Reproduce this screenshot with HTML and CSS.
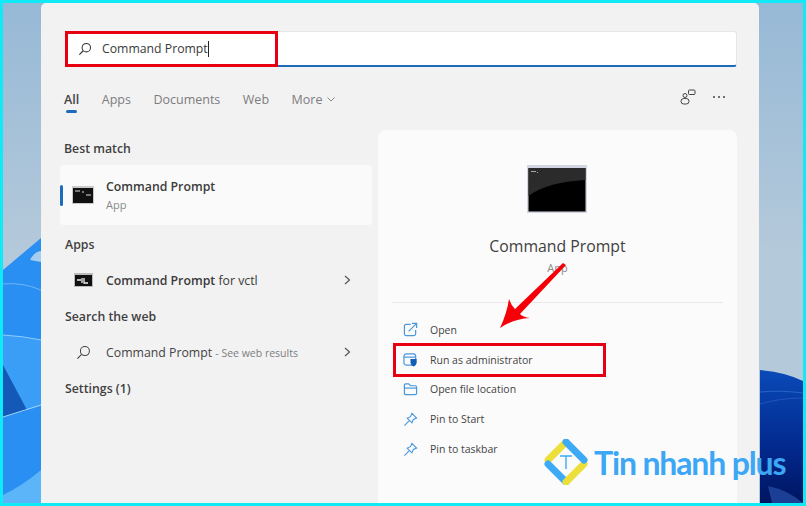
FILE: index.html
```html
<!DOCTYPE html>
<html lang="en">
  <head>
    <meta charset="UTF-8">
    <title>Command Prompt - Search</title>
    <link rel="stylesheet" href="styles.css">
  </head>
  <body>
    <div class="frame">
      <svg class="wallpaper" width="800" height="500" viewBox="3 3 800 500">
        <defs>
          <linearGradient id="sky" x1="0" y1="0" x2="0" y2="1">
            <stop offset="0" stop-color="#97b9d6"/>
            <stop offset="0.5" stop-color="#b4c9da"/>
            <stop offset="1" stop-color="#b4c9da"/>
          </linearGradient>
          <linearGradient id="navy" x1="0" y1="0" x2="0" y2="1">
            <stop offset="0" stop-color="#0a4ab8"/>
            <stop offset="0.6" stop-color="#02288c"/>
            <stop offset="1" stop-color="#001560"/>
          </linearGradient>
        </defs>
        <rect x="3" y="3" width="800" height="500" fill="url(#sky)"/>
        <path d="M3 270 L41 238 V503 H3 Z" fill="#2a8ff2"/>
        <path d="M30 260 Q34 252 41 251 V262 Z" fill="#a5cdf0"/>
        <path d="M3 284 Q22 282 41 290" fill="none" stroke="#6db6f7" stroke-width="1"/>
        <path d="M3 335 Q22 336 41 340 V405 L3 417 Z" fill="#3a9ef6"/>
        <path d="M3 335 Q22 336 41 340" fill="none" stroke="#8fcdfb" stroke-width="1"/>
        <path d="M3 365 L27 410 L3 417 Z" fill="#1559b8"/>
        <path d="M3 417 L41 405" fill="none" stroke="#a3d7fb" stroke-width="1"/>
        <path d="M3 495 Q22 486 41 470 V503 H3 Z" fill="#5bb5f8"/>
        <path d="M760 370 Q785 372 803 381 V503 H760 Z" fill="url(#navy)"/>
        <path d="M760 392 Q780 390 803 393" fill="none" stroke="#2a62c8" stroke-width="1"/>
        <path d="M760 404 Q780 398 803 398" fill="none" stroke="#1f55bb" stroke-width="1"/>
        <path d="M768 486 Q788 490 803 503 H772 Z" fill="#1a3f94"/>
      </svg>

      <div class="panel">
        <div class="search-box">
          <svg class="search-icon" width="14" height="14" viewBox="0 0 16 16">
            <circle cx="9.5" cy="6.5" r="4.8" fill="none" stroke="#333" stroke-width="1.2"/>
            <path d="M6 10 L1.5 14.5" stroke="#333" stroke-width="1.3"/>
          </svg>
          <span class="search-text">Command Prompt</span><span class="caret"></span>
        </div>

        <div class="tabs">
          <div class="tab active">All</div>
          <div class="tab">Apps</div>
          <div class="tab">Documents</div>
          <div class="tab">Web</div>
          <div class="tab">More
            <svg width="8" height="5" viewBox="0 0 8 5"><path d="M.5 .5 L4 4 L7.5 .5" fill="none" stroke="#888" stroke-width="1"/></svg>
          </div>
          <div class="tab-tools">
            <svg width="16" height="16" viewBox="0 0 16 16" fill="none" stroke="#444" stroke-width="1">
              <rect x="8.5" y="1" width="6.5" height="4.5" rx="1"/>
              <circle cx="5" cy="6.5" r="2"/>
              <rect x="1" y="9.5" width="8" height="5.5" rx="2.7"/>
            </svg>
            <div class="dots"><span></span><span></span><span></span></div>
          </div>
        </div>

        <div class="main">
          <div class="results">
            <div class="heading first">Best match</div>
            <div class="best-card">
              <span class="accent"></span>
              <svg class="cmd-small" width="22" height="18" viewBox="0 0 22 18">
                <rect width="22" height="18" fill="#c9c9c9"/>
                <rect x="1" y="2" width="20" height="15" fill="#111"/>
                <path d="M3 5 H8 M10 6 H12 M14 9 H19" stroke="#ddd" stroke-width="1.2"/>
              </svg>
              <div>
                <div class="item-title">Command Prompt</div>
                <div class="item-sub">App</div>
              </div>
            </div>
            <div class="heading">Apps</div>
            <div class="row">
              <svg class="cmd-small" width="19" height="14" viewBox="0 0 19 14">
                <rect width="19" height="14" fill="#bbb"/>
                <rect x="1" y="2" width="17" height="11" fill="#111"/>
                <path d="M3 7 H7 M8 5 V10 M10 5 V10 H14" stroke="#eee" stroke-width="1.3" fill="none"/>
              </svg>
              <span class="item-title">Command Prompt <span class="light">for vctl</span></span>
              <svg class="chevron" width="7" height="10" viewBox="0 0 7 10"><path d="M1 1 L5.5 5 L1 9" fill="none" stroke="#555" stroke-width="1.2"/></svg>
            </div>
            <div class="heading">Search the web</div>
            <div class="row">
              <svg class="web-icon" width="15" height="15" viewBox="0 0 16 16">
                <circle cx="9.5" cy="6.5" r="4.8" fill="none" stroke="#444" stroke-width="1.1"/>
                <path d="M6 10 L1.5 14.5" stroke="#444" stroke-width="1.2"/>
              </svg>
              <span class="item-web">Command Prompt <span class="see-web">- See web results</span></span>
              <svg class="chevron" width="7" height="10" viewBox="0 0 7 10"><path d="M1 1 L5.5 5 L1 9" fill="none" stroke="#555" stroke-width="1.2"/></svg>
            </div>
            <div class="heading">Settings (1)</div>
          </div>

          <div class="detail">
            <svg class="cmd-large" width="60" height="48" viewBox="0 0 60 48">
              <rect width="60" height="48" fill="#d3d6e2"/>
              <rect x="1.5" y="3" width="57" height="43.5" fill="#000"/>
              <path d="M1.5 3 H58.5 V15 Q20 17 1.5 31 Z" fill="#2b2b2b"/>
              <path d="M4 6.5 H9 M10 7.5 H11" stroke="#aaa" stroke-width="1"/>
            </svg>
            <div class="detail-title">Command Prompt</div>
            <div class="detail-sub">App</div>
            <div class="divider"></div>
            <div class="action">
              <svg width="15" height="15" viewBox="0 0 16 16" fill="none" stroke="#4a98dc" stroke-width="1.3">
                <path d="M8 2.5 H3.5 Q1.5 2.5 1.5 4.5 V12.5 Q1.5 14.5 3.5 14.5 H11.5 Q13.5 14.5 13.5 12.5 V8.5"/>
                <path d="M6 10 L14 2 M9.5 1.5 H14.5 V6.5"/>
              </svg>
              Open
            </div>
            <div class="action">
              <svg width="15" height="15" viewBox="0 0 16 16">
                <rect x="1" y="2" width="12.5" height="12" rx="2.5" fill="none" stroke="#4a98dc" stroke-width="1.3"/>
                <path d="M1 5.5 H13.5" stroke="#4a98dc" stroke-width="1.3"/>
                <path d="M8 7.5 H14.5 V11 Q14.5 14 11.2 15.5 Q8 14 8 11 Z" fill="#0f5fb5"/>
              </svg>
              Run as administrator
            </div>
            <div class="action">
              <svg width="15" height="15" viewBox="0 0 16 16" fill="none" stroke="#4a98dc" stroke-width="1.3">
                <path d="M1.5 12 V3.5 Q1.5 2 3 2 H6 L8 4 H13 Q14.5 4 14.5 5.5 V12 Q14.5 13.5 13 13.5 H3 Q1.5 13.5 1.5 12 Z"/>
                <path d="M1.5 6.5 H14.5"/>
              </svg>
              Open file location
            </div>
            <div class="action">
              <svg width="15" height="15" viewBox="0 0 16 16" fill="none" stroke="#4a98dc" stroke-width="1.2">
                <path d="M9.5 1.5 L14.5 6.5 L11 8 L9.5 11.5 L4.5 6.5 L8 5 Z"/>
                <path d="M6.5 9.5 L1.5 14.5"/>
              </svg>
              Pin to Start
            </div>
            <div class="action">
              <svg width="15" height="15" viewBox="0 0 16 16" fill="none" stroke="#4a98dc" stroke-width="1.2">
                <path d="M9.5 1.5 L14.5 6.5 L11 8 L9.5 11.5 L4.5 6.5 L8 5 Z"/>
                <path d="M6.5 9.5 L1.5 14.5"/>
              </svg>
              Pin to taskbar
            </div>
          </div>
        </div>
      </div>

      <!-- annotations on top of the screenshot -->
      <div class="mark mark-search"></div>
      <div class="mark mark-admin"></div>
      <svg class="arrow" width="80" height="80" viewBox="0 0 80 80">
        <path d="M70 2 L73 4 L27 53 Q30 56 37 57 Q20 58 7 67 Q14 52 16 38 Q18 44 22 48 Z" fill="#f50008"/>
      </svg>

      <div class="brand">
        <svg width="46" height="46" viewBox="0 0 46 46">
          <path d="M23 3 L5 21" stroke="#ecdf3a" stroke-width="7" stroke-linecap="round"/>
          <path d="M5 25 L23 43" stroke="#3ea9f5" stroke-width="7" stroke-linecap="round"/>
          <path d="M23 43 L41 25" stroke="#ecdf3a" stroke-width="7" stroke-linecap="round"/>
          <path d="M41 21 L23 3" stroke="#3ea9f5" stroke-width="7" stroke-linecap="round"/>
          <path d="M17 17 H29 M23 17 V30" stroke="#3ea9f5" stroke-width="1.4" fill="none"/>
        </svg>
        <span class="brand-name">Tin nhanh plus</span>
      </div>
    </div>
  </body>
</html>
```

FILE: styles.css
```css
html, body {
    margin: 0;
    padding: 0;
}

body {
    font-family: "Open Sans", Arial, sans-serif;
    color: #333;
}

.frame {
    position: relative;
    width: 806px;
    height: 506px;
    box-sizing: border-box;
    border: 3px solid #10e9f6;
    overflow: hidden;
}

.wallpaper {
    position: absolute;
    top: 0;
    left: 0;
}

.panel {
    position: relative;
    box-sizing: border-box;
    width: 718px;
    height: 100%;
    margin-left: 38px;
    padding: 28px 22px 0 24px;
    background-color: #f2f2f3;
    border-radius: 5px 5px 0 0;
}

.search-box {
    display: flex;
    align-items: center;
    box-sizing: border-box;
    height: 36px;
    padding-left: 12px;
    background-color: #ffffff;
    border: 1px solid #e6e6e6;
    border-bottom: 2px solid #1c6cbb;
    border-radius: 3px;
}

.search-icon {
    margin-right: 10px;
}

.search-text {
    font-size: 12.25px;
    color: #3a3a3a;
}

.caret {
    width: 1px;
    height: 16px;
    background-color: #222;
}

.tabs {
    display: flex;
    align-items: center;
    height: 22px;
    margin-top: 21px;
    gap: 22.5px;
    margin-left: -1px;
    font-size: 12.5px;
    color: #7d7d7d;
}

.tab {
    position: relative;
}

.tab svg {
    margin-left: 1px;
    vertical-align: 2px;
}

.tab.active {
    color: #444;
    font-weight: 600;
}

.tab.active::after {
    content: "";
    position: absolute;
    left: 2px;
    right: 2px;
    bottom: -5px;
    height: 3px;
    border-radius: 2px;
    background-color: #1c6cbb;
}

.tab-tools {
    display: flex;
    align-items: center;
    gap: 17px;
    margin-left: auto;
    margin-right: 12px;
    margin-top: -4px;
}

.dots {
    display: flex;
    gap: 2.5px;
}

.dots span {
    width: 2.5px;
    height: 2.5px;
    background-color: #444;
    border-radius: 50%;
}

.main {
    display: flex;
    gap: 6px;
    margin-top: 20px;
    margin-left: -5px;
}

.results {
    width: 312px;
    flex: none;
}

.heading {
    display: flex;
    align-items: center;
    height: 36px;
    padding-left: 5px;
    font-size: 12.3px;
    font-weight: 600;
    color: #3f3f3f;
}

.heading.first {
    height: 34px;
    padding-top: 1px;
    padding-left: 4px;
}

.best-card {
    position: relative;
    display: flex;
    align-items: center;
    height: 60px;
    margin-bottom: 1px;
    background-color: #fafafa;
    border-radius: 4px;
}

.accent {
    position: absolute;
    left: 0;
    top: 20px;
    width: 3px;
    height: 21px;
    border-radius: 2px;
    background-color: #1c6cbb;
}

.best-card .cmd-small {
    margin: 0 12px 0 12px;
}

.item-title {
    font-size: 12.3px;
    font-weight: 600;
    color: #3a3a3a;
}

.light {
    font-weight: 400;
}

.item-sub {
    margin-top: 2px;
    font-size: 11px;
    color: #8a8a8a;
}

.row {
    display: flex;
    align-items: center;
    height: 36px;
}

.row .cmd-small {
    margin: 0 13px 0 14px;
}

.web-icon {
    margin: 0 15px 0 16px;
}

.item-web {
    font-size: 12.3px;
    color: #444;
}

.see-web {
    font-size: 10.5px;
    color: #7d7d7d;
}

.chevron {
    margin-left: auto;
    margin-right: 21px;
}

.detail {
    flex: 1;
    display: flex;
    flex-direction: column;
    align-items: center;
    height: 373px;
    box-sizing: border-box;
    padding: 35px 14px 0;
    background-color: #fbfbfb;
    border-radius: 8px 8px 0 0;
}

.cmd-large {
    margin-left: -2px;
}

.detail-title {
    margin-top: 22px;
    font-size: 15.8px;
    line-height: 22px;
    color: #3f3f3f;
}

.detail-sub {
    margin-top: 3px;
    font-size: 11px;
    line-height: 16px;
    color: #8a8a8a;
}

.divider {
    align-self: stretch;
    height: 1px;
    margin: 26px 0 12px;
    background-color: #e8e8e8;
}

.action {
    display: flex;
    align-items: center;
    align-self: stretch;
    gap: 12px;
    height: 29.8px;
    padding-left: 11px;
    font-size: 10.5px;
    color: #444;
}

.mark {
    position: absolute;
    box-sizing: border-box;
    border: 3px solid #e60012;
}

.mark-search {
    left: 62px;
    top: 28px;
    width: 213px;
    height: 36px;
}

.mark-admin {
    left: 390px;
    top: 340px;
    width: 213px;
    height: 34px;
}

.arrow {
    position: absolute;
    left: 490px;
    top: 258px;
}

.brand {
    position: absolute;
    left: 540px;
    top: 436px;
    display: flex;
    align-items: center;
    gap: 5px;
}

.brand-name {
    font-family: Lato, Arial, sans-serif;
    font-size: 32px;
    letter-spacing: -1.15px;
    font-weight: 700;
    color: #3ba7f5;
    white-space: nowrap;
}
```
